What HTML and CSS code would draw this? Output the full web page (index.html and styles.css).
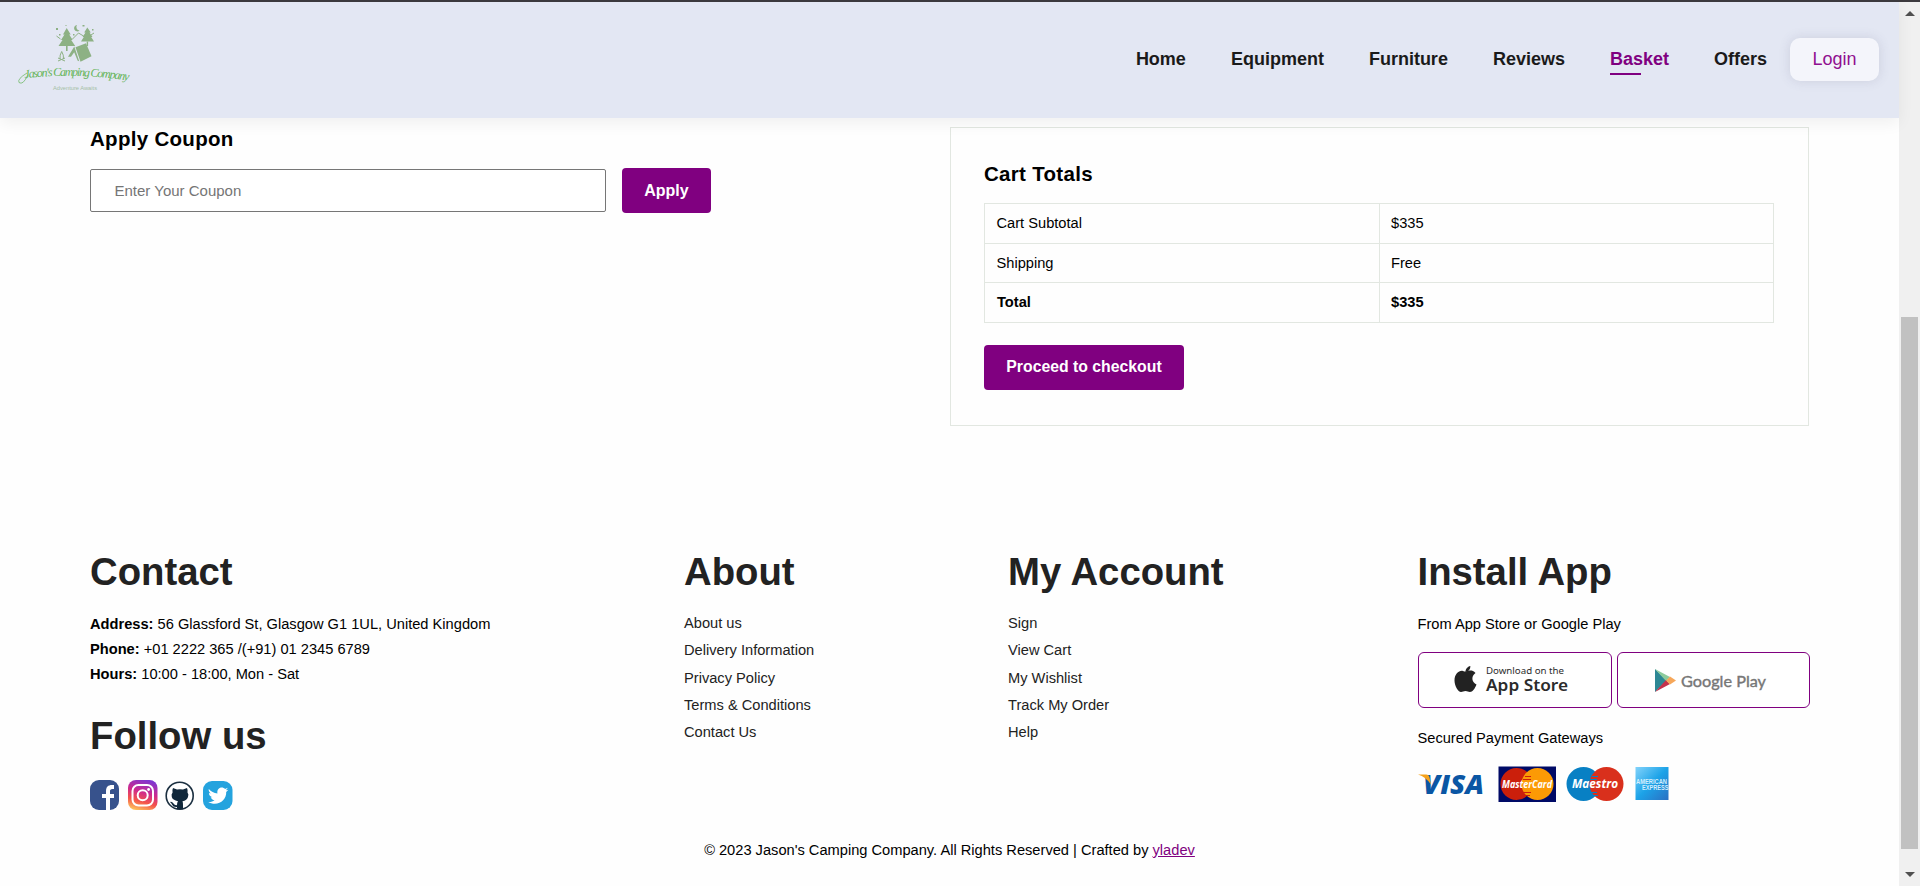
FILE: index.html
```html
<!DOCTYPE html>
<html lang="en">
<head>
<meta charset="utf-8">
<title>Jason's Camping Company</title>
<link rel="stylesheet" href="styles.css">
</head>
<body>
<div class="window">
  <div class="page">
    <header class="header">
      <a class="logo" href="#">
        <svg width="116" height="72" viewBox="0 0 116 72">
          <g fill="#8db184">
            <path d="M49.700 5l4 6.500h-1.500l3.500 5.500h-1.500l4 6H41.500l4-6H44l3.500-5.500H46z"/>
            <path d="M49 23h1.600v5H49z"/>
            <path d="M70.300 4.500l3.500 5h-1.300l3 4.500h-1.300l2.800 4.500H64l2.800-4.500h-1.300l3-4.500h-1.300z"/>
            <path d="M69.700 18.500h1.400v4.500h-1.400z"/>
            <path d="M58.500 24.300l10.500-4 5.500 13-11 5.400z"/>
            <path d="M57.300 23.500L51 33.700h3l3.200-4.500 3.500 8.500 1.500.5z"/>
            <path d="M60 2a3.200 3.200 0 1 0 2.500 5.500A3.500 3.500 0 0 1 60 2z"/>
            <path d="M39 5h2v2h-2zM48.500 2h1v1h-1zM65.500 2h2v1.500h-2zM75 6h1.500v1.500H75zM42 11h1.500v1.500H42zM56 11h1.500v1.500H56z"/>
          </g>
          <path d="M39.500 13l4 3M55.500 16l6-6 5 3M74 12l3-2M43 36q-.5-4 1.700-7.500 2.200 3.500 1.800 7.500M41 38l7-3M41 35l7 3" fill="none" stroke="#8db184"/>
          <path id="name-curve" d="M3 56 C30 52 75 51 113 58" fill="none"/>
          <path d="M10 50Q0 56 2 59.500q4 3 8.500-7" fill="none" stroke="#63b457" stroke-width=".7"/>
          <text class="logo-name"><textPath href="#name-curve" startOffset="5" textLength="104">Jason's Camping Company</textPath></text>
          <text class="logo-tag" x="36" y="67" textLength="44" lengthAdjust="spacingAndGlyphs">Adventure Awaits</text>
        </svg>
      </a>
      <nav class="nav">
        <a href="#">Home</a>
        <a href="#">Equipment</a>
        <a href="#">Furniture</a>
        <a href="#">Reviews</a>
        <a class="active" href="#">Basket</a>
        <a href="#">Offers</a>
        <a class="login" href="#">Login</a>
      </nav>
    </header>

    <main class="cart">
      <section class="coupon">
        <h3>Apply Coupon</h3>
        <div class="coupon-row">
          <input type="text" placeholder="Enter Your Coupon">
          <button class="btn">Apply</button>
        </div>
      </section>
      <section class="totals">
        <h3>Cart Totals</h3>
        <table>
          <tr><td>Cart Subtotal</td><td>$335</td></tr>
          <tr><td>Shipping</td><td>Free</td></tr>
          <tr class="sum"><td>Total</td><td>$335</td></tr>
        </table>
        <button class="btn checkout">Proceed to checkout</button>
      </section>
    </main>

    <footer class="footer">
      <div class="columns">
        <div class="col col-contact">
          <h2>Contact</h2>
          <p><b>Address:</b> 56 Glassford St, Glasgow G1 1UL, United Kingdom</p>
          <p><b>Phone:</b> +01 2222 365 /(+91) 01 2345 6789</p>
          <p><b>Hours:</b> 10:00 - 18:00, Mon - Sat</p>
          <h2 class="follow">Follow us</h2>
          <div class="social">
            <svg width="30" height="30" viewBox="0 0 30 30"><rect width="29" height="30" rx="9" fill="#37528c"/><path d="M16 30V18h-4v-4h4v-3c0-4 2-6 6-6h2v4h-1.500c-2 0-2.500 1-2.500 2v3h4v4h-4v12z" fill="#fff"/></svg>
            <svg width="30" height="30" viewBox="0 0 30 30">
              <defs>
                <linearGradient id="ig" x1="0.300" y1="1" x2="0.600" y2="0"><stop offset="0" stop-color="#fdc05c"/><stop offset=".3" stop-color="#f4544a"/><stop offset=".6" stop-color="#cf2a8c"/><stop offset="1" stop-color="#7f35d0"/></linearGradient>
              </defs>
              <rect width="29.500" height="30" rx="8" fill="url(#ig)"/>
              <g fill="none" stroke="#fff" stroke-width="2"><rect x="4.500" y="5" width="20.500" height="20.500" rx="6"/><circle cx="14.700" cy="15.200" r="5"/></g><circle cx="20.600" cy="9.500" r="1.400" fill="#fff"/>
            </svg>
            <svg width="30" height="30" viewBox="0 0 30 30"><circle cx="14.700" cy="15.700" r="13.500" fill="#fff" stroke="#1b2f40" stroke-width="1.600"/><path d="M8 8l4 1.500q3-.7 6 0L22 8q1 2 .5 4.500Q24 14 23 17q-1 3.500-5.500 4.300Q18 22.500 18 25v4.200h-6V27q-4 .5-5-2.500-.5-1.500-2-2.500 2-.7 3.500 1.500T12 25q0-2.500 1-3.700Q7.500 20 6.800 17q-.8-3 .8-4.500Q7 10 8 8z" fill="#10273a"/></svg>
            <svg width="30" height="30" viewBox="0 0 30 30"><rect y="1" width="29.500" height="29" rx="9" fill="#24a3de"/><path transform="translate(-1.200 -1.200) scale(1.080)" d="M6.500 9.500c2 2.300 4.800 3.800 8 4-.6-3 1.300-5.400 4-5.400 1.200 0 2.200.5 3 1.300l2.600-1-1.700 2.200 2.200-.5-2 2.200c.3 6-4.400 10.800-10.500 10.800-2.300 0-4.400-.6-6.100-1.700 2.200.2 4.200-.4 5.800-1.600-1.700-.1-3-1.200-3.600-2.700h1.600c-1.900-.5-3.200-2-3.200-3.900l1.700.4c-1.700-1.300-2.200-3.200-1.800-4.100z" fill="#fff"/></svg>
          </div>
        </div>
        <div class="col col-about">
          <h2>About</h2>
          <a href="#">About us</a>
          <a href="#">Delivery Information</a>
          <a href="#">Privacy Policy</a>
          <a href="#">Terms &amp; Conditions</a>
          <a href="#">Contact Us</a>
        </div>
        <div class="col col-account">
          <h2>My Account</h2>
          <a href="#">Sign</a>
          <a href="#">View Cart</a>
          <a href="#">My Wishlist</a>
          <a href="#">Track My Order</a>
          <a href="#">Help</a>
        </div>
        <div class="col col-install">
          <h2>Install App</h2>
          <p>From App Store or Google Play</p>
          <div class="badges">
            <div class="badge">
              <svg width="192" height="54" viewBox="0 0 192 54">
                <path d="M47 18.500c2.500-1 6.500-2 9.500 1.500-5 3.500-3.500 9.500 1 11.500-1.500 4-4 7.500-6.500 7.500-2 0-2.500-1-4.500-1s-2.700 1-4.500 1c-3 0-6.500-6-6.500-11.500 0-7 5-10.500 8.500-9.500 1.300.4 2 .8 3 .5z" fill="#222"/>
                <path d="M46.500 17c-.3-2.800 2-5.500 4.800-6 .3 3-2 5.800-4.800 6z" transform="translate(0 2)" fill="#222"/>
                <text class="ink" x="67" y="20.500" font-size="9.500" textLength="78" lengthAdjust="spacingAndGlyphs">Download on the</text>
                <text class="ink store" x="67" y="38" font-size="16.500" textLength="82" lengthAdjust="spacingAndGlyphs">App Store</text>
              </svg>
            </div>
            <div class="badge play-badge">
              <svg width="191" height="54" viewBox="0 0 191 54">
                <path d="M37 16v23l12-11.500z" fill="#2d8794"/>
                <path d="M37 16l15 8-4 4z" fill="#8ccb9c"/>
                <path d="M37 39l15-8-4-4z" fill="#c4314b"/>
                <path d="M52 23.500l6 4-6 4-4-4z" fill="#f6a75a"/>
                <text class="play" x="63" y="33.500" font-size="16" textLength="85" lengthAdjust="spacingAndGlyphs">Google Play</text>
              </svg>
            </div>
          </div>
          <p>Secured Payment Gateways</p>
          <svg class="payments" width="254" height="38" viewBox="0 0 254 38">
            <defs>
              <linearGradient id="amex" x1="0" y1="0" x2="1" y2="1"><stop offset="0" stop-color="#83d3fb"/><stop offset=".5" stop-color="#1ca3e8"/><stop offset="1" stop-color="#2b6fc2"/></linearGradient>
            </defs>
            <text class="visa" x="5" y="28" textLength="61" lengthAdjust="spacingAndGlyphs">VISA</text>
            <path d="M0 8.500h8q3 0 3.500 3l1.500 7Q8 11 0 8.500z" fill="#f6a21b"/>
            <rect x="80.500" y=".5" width="57.500" height="35.500" fill="#000a66"/>
            <circle cx="98.500" cy="18" r="16" fill="#cb1f0b"/><circle cx="119.500" cy="18" r="16" fill="#fc9a05"/>
            <path d="M107 10.500h6M105 13.500h8M105 26.500h8M107 29.500h5" stroke="#cb1f0b"/>
            <text class="card" x="84" y="22" font-size="11" textLength="50" lengthAdjust="spacingAndGlyphs">MasterCard</text>
            <circle cx="165.500" cy="18" r="17" fill="#0880c4"/><circle cx="188.500" cy="18" r="17" fill="#d9301c"/>
            <path d="M174 10.500h6M172 13.500h7M172 26.500h7M174 29.500h6" stroke="#0880c4"/>
            <text class="card" x="154" y="22" font-size="12" textLength="46" lengthAdjust="spacingAndGlyphs">Maestro</text>
            <rect x="217.500" y="1" width="33" height="33" fill="url(#amex)"/>
            <text class="amex" x="218" y="17.500" textLength="31" lengthAdjust="spacingAndGlyphs">AMERICAN</text>
            <text class="amex" x="224" y="24" textLength="26.500" lengthAdjust="spacingAndGlyphs">EXPRESS</text>
          </svg>
        </div>
      </div>
      <p class="copyright">© 2023 Jason's Camping Company. All Rights Reserved | Crafted by <a href="#">yladev</a></p>
    </footer>
  </div>
  <div class="scrollbar">
    <span class="arrow up"></span>
    <span class="thumb"></span>
    <span class="arrow down"></span>
  </div>
</div>
</body>
</html>
```
FILE: styles.css
```css
* { box-sizing: border-box; margin: 0; padding: 0; }
body { font-family: "Liberation Sans", Arial, sans-serif; font-size: 14.65px; color: #000; background: #fefefe; overflow: hidden; }
a { color: inherit; text-decoration: none; }
svg { display: block; }

.window { display: flex; height: 886px; border-top: 2px solid #3c3a3e; }
.page { width: 1899px; display: flex; flex-direction: column; }

.header { height: 116px; flex: none; display: flex; justify-content: space-between; align-items: flex-start; padding: 0 20px 0 17px; background: #e3e7f3; box-shadow: 0 5px 15px rgba(0, 0, 0, .06); position: relative; }
.logo { padding-top: 21px; }
.logo-name { font: italic 12px "Liberation Serif", serif; fill: #63b457; }
.logo-tag { font-size: 6px; fill: #a5bfa5; }
.nav { display: flex; align-items: center; height: 43px; margin-top: 36px; gap: 45px; font-size: 18px; font-weight: bold; color: #1a1a1a; }
.nav .active { color: #800080; position: relative; }
.nav .active::after { content: ""; position: absolute; left: 0; bottom: -5px; width: 31px; height: 2px; background: #800080; }
.nav .login { margin-left: -22px; width: 89px; height: 43px; line-height: 42px; text-align: center; font-weight: normal; color: #901090; background: #f4f5fb; border-radius: 10px; box-shadow: 0 0 12px rgba(80, 80, 120, .16); }

.cart { display: flex; justify-content: space-between; padding: 9px 90px 0; }
h3 { font-size: 20.5px; line-height: 24px; letter-spacing: .3px; }
.coupon-row { display: flex; align-items: center; gap: 16px; margin-top: 17px; }
.coupon input { width: 516px; height: 43px; padding: 0 23.5px; border: 1px solid #767676; border-radius: 2px; font: 15px "Liberation Sans", Arial, sans-serif; background: #fff; }
.coupon input::placeholder { color: #757575; }
.btn { display: block; height: 45px; padding: 0; border: 0; border-radius: 4px; background: #800080; color: #fff; font: bold 16px "Liberation Sans", Arial, sans-serif; white-space: nowrap; }
.coupon .btn { width: 89px; }
.checkout { width: 200px; margin-top: 22px; font-size: 15.8px; }
.totals { width: 859px; height: 299px; padding: 34px 34px 0 33px; border: 1px solid #e2e7e1; }
table { width: 790px; margin-top: 17px; border-collapse: collapse; table-layout: fixed; }
td { height: 39.5px; padding: 0 11.5px; border: 1px solid #e2e7e1; }
.sum { font-weight: bold; }
.sum td:first-child { padding-left: 12px; }

.footer { padding: 121px 90px 0; }
.columns { display: grid; grid-template-columns: 594px 324px 409.5px 391.5px; height: 273px; }
h2 { font-size: 38.3px; line-height: 50px; color: #222; margin-bottom: 14.5px; }
.col-contact p { line-height: 25px; }
.col-contact .follow { margin: 24px 0 19px; }
.social { display: flex; gap: 7.7px; }
.col-about h2, .col-account h2 { margin-bottom: 13px; }
.col-about a, .col-account a { display: block; line-height: 27.3px; color: #222; }
.col-install p { line-height: 25px; }
.badges { display: flex; gap: 5px; margin: 15px 0 18px; }
.badge { width: 194px; height: 56px; border: 1px solid #800080; border-radius: 6px; background: #fff; }
.play-badge { width: 193px; }
.payments { margin-top: 15px; }
.ink { fill: #2b2b2b; font-family: "Noto Sans", sans-serif; }
.store { font-weight: 600; }
.play { fill: #777; font-family: Lato, sans-serif; stroke: #777; stroke-width: .4px; }
.visa { font: italic 800 27px "Open Sans", sans-serif; fill: #0a56a4; }
.card { font-family: "Open Sans", sans-serif; font-style: italic; font-weight: bold; fill: #fff; }
.amex { font-size: 6.5px; font-weight: bold; fill: #d4effd; }
.copyright { text-align: center; line-height: 20px; margin-top: 20px; }
.copyright a { color: #800080; text-decoration: underline; }

.scrollbar { width: 21px; background: #f0f0f0; display: flex; flex-direction: column; align-items: center; }
.arrow { border: 5px solid transparent; border-top: 0; border-bottom: 5px solid #505050; margin-top: 9px; }
.thumb { width: 17px; height: 532px; margin-top: 301px; background: #c1c1c1; }
.arrow.down { border-bottom: 0; border-top: 5px solid #505050; margin-top: 23px; }
```
